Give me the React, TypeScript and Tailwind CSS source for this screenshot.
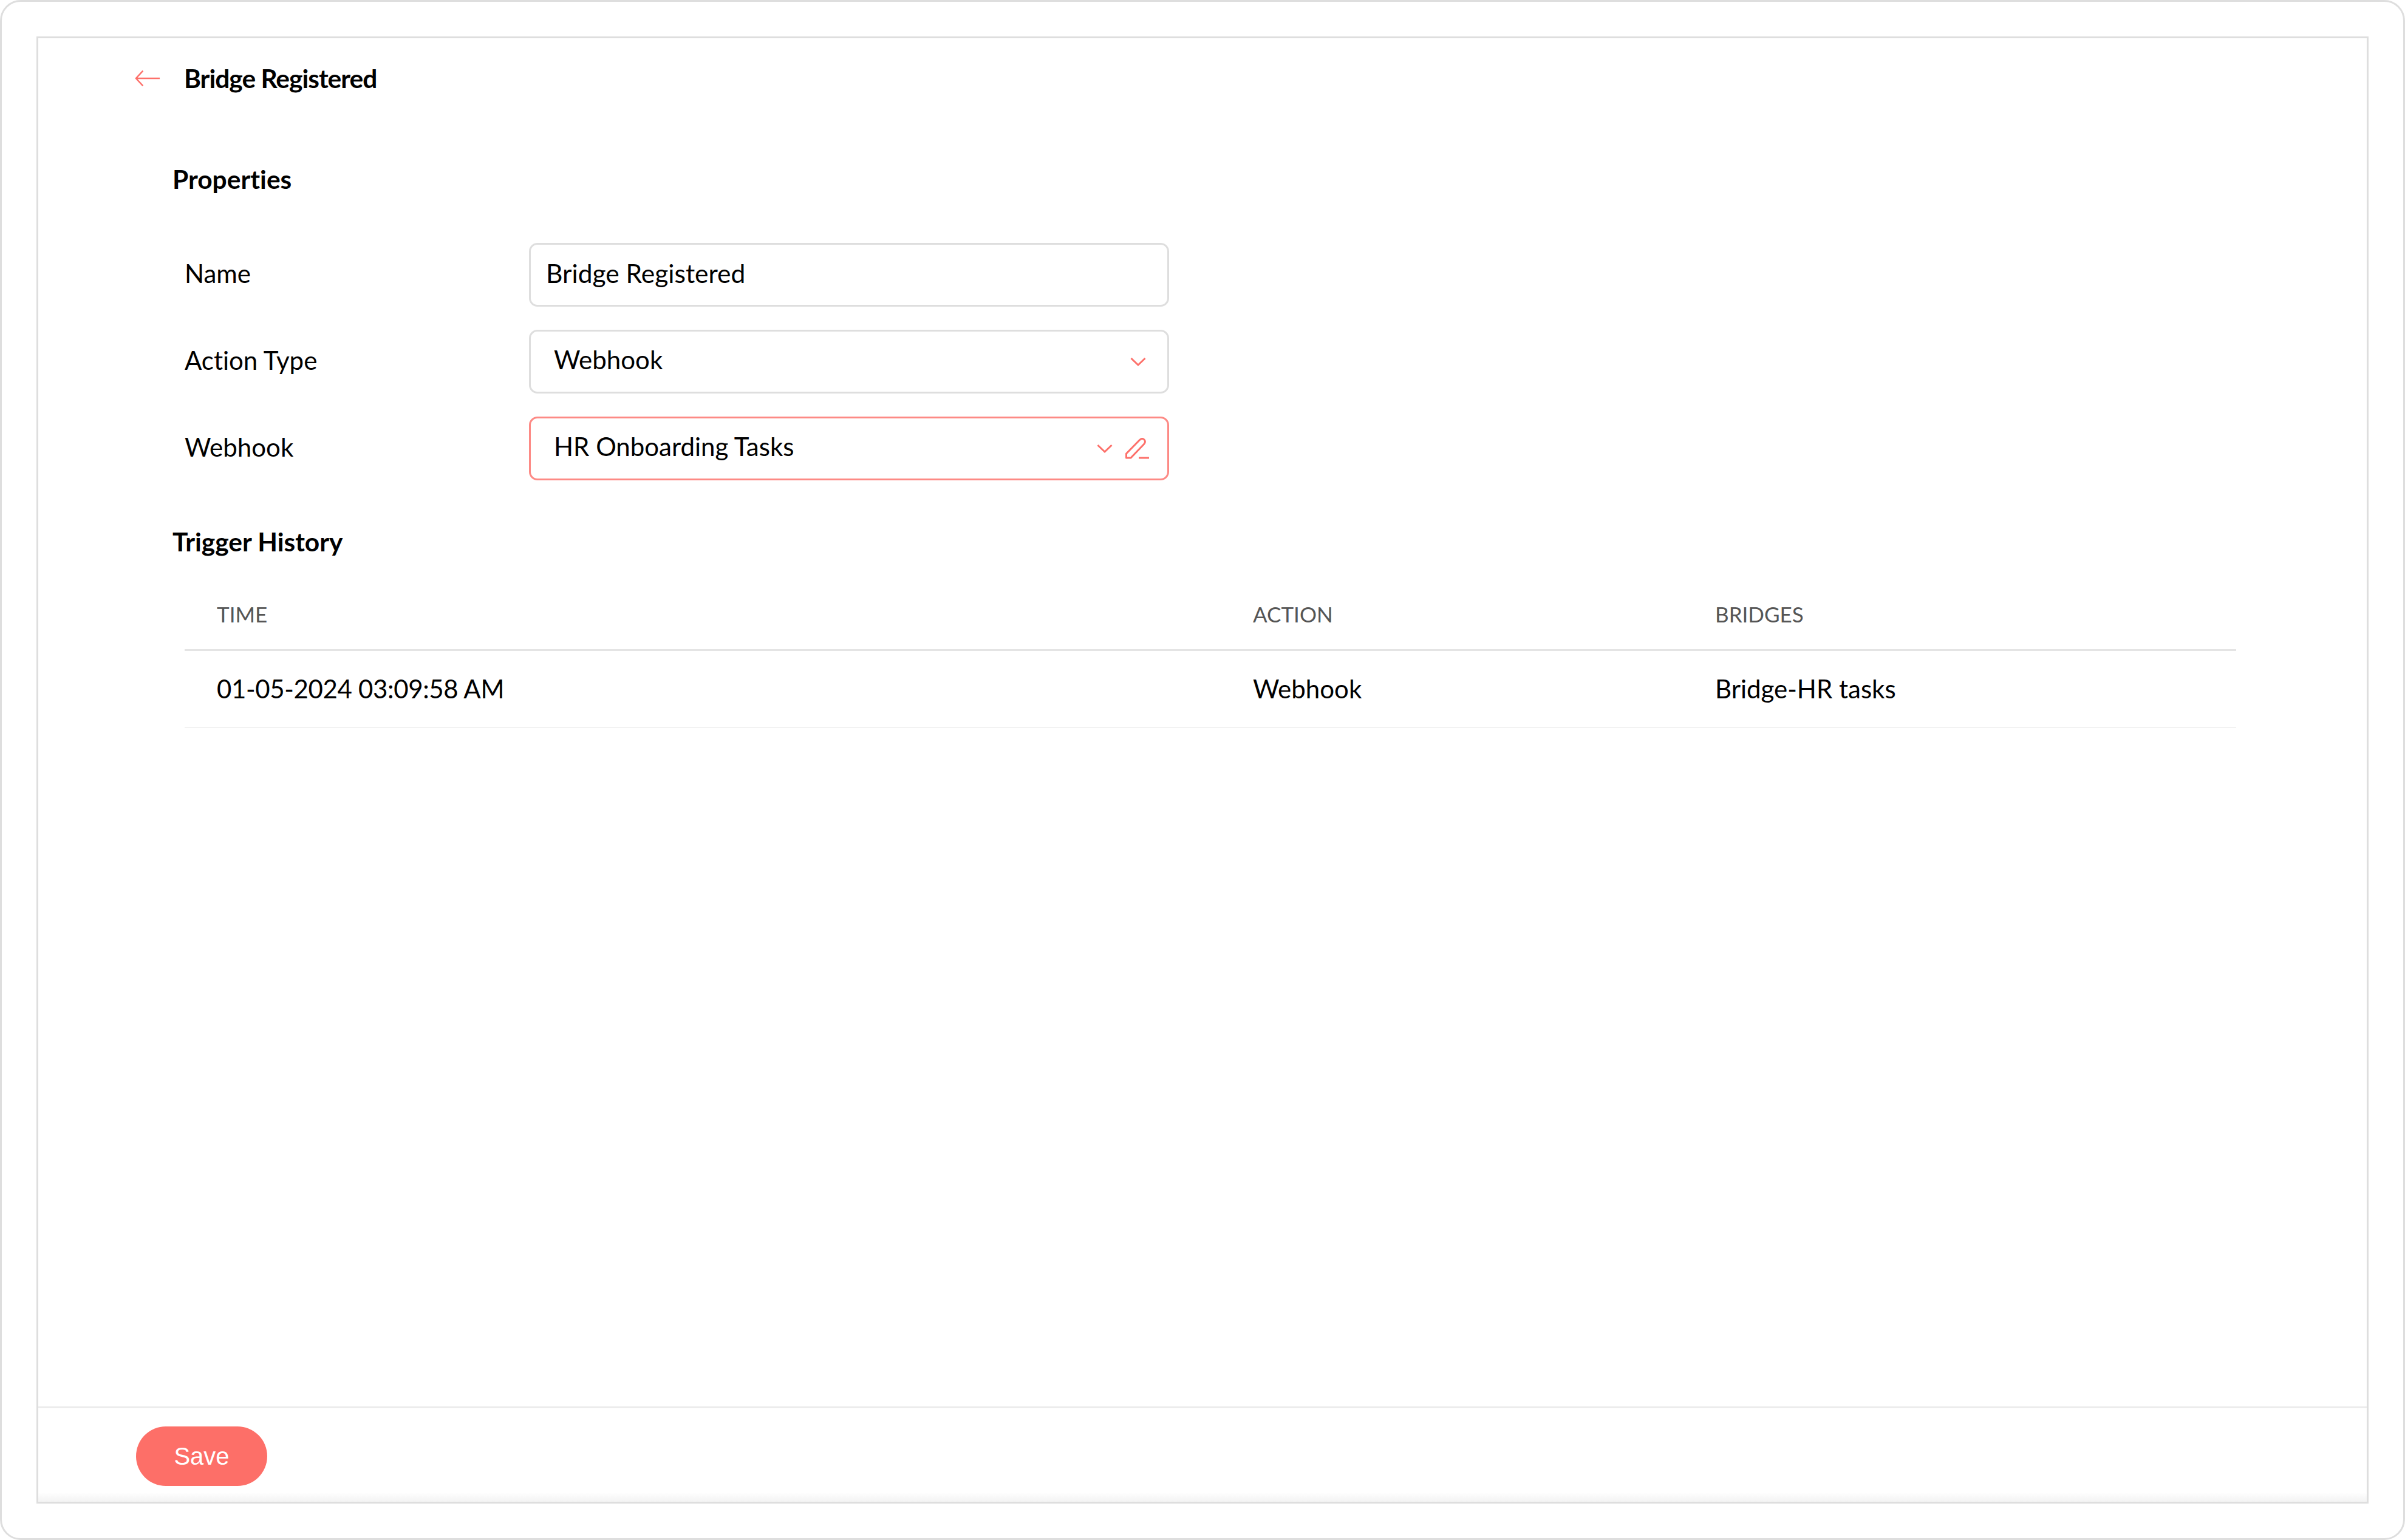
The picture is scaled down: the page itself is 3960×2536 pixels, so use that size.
import { useState } from "react";

const fieldClass = "flex h-[105px] w-[1054px] items-center rounded-[14px] border-[3px] bg-white";
const labelClass = "mb-[5px] w-[567px] text-[42px] leading-[48px]";

function Chevron() {
  return (
    <svg viewBox="0 0 26 16" className="h-[16px] w-[26px]" fill="none" stroke="#fd706a" strokeWidth="3">
      <path d="M1.5 2 L13 13 L24.5 2" />
    </svg>
  );
}

function Pencil() {
  return (
    <svg viewBox="0 0 40 36" className="h-[36px] w-[40px]" fill="none" stroke="#fd706a" strokeWidth="3" strokeLinejoin="round">
      <path d="M1.5 26 L23 4 C26 1 29 1 31 3 C33 5 33 8 30.5 10.5 L9 33 L1.5 33 Z" />
      <path d="M22 33 L39 33" />
    </svg>
  );
}

export default function App() {
  const [name, setName] = useState("Bridge Registered");

  return (
    <div className="h-[2536px] w-[3960px] rounded-[34px] border-[3px] border-[#dedede] bg-white p-[57px] font-['Lato',sans-serif] text-black [font-variant-ligatures:none]">
      <div className="flex h-full flex-col border-[3px] border-[#dedede]">
        <main className="flex-1">
          <div className="flex items-center pl-[159px] pt-[42px]">
            <svg viewBox="0 0 44 28" className="h-[28px] w-[42px]" fill="none" stroke="#fd706a" strokeWidth="2.5">
              <path d="M43 14 L2 14 M14 1 L2 14 L14 27" />
            </svg>
            <h1 className="ml-[39px] text-[42.5px] font-bold leading-[48px] tracking-[-1px]">Bridge Registered</h1>
          </div>

          <section className="pl-[221px] pr-[216px]">
            <h2 className="mt-[118px] text-[42.5px] font-bold leading-[48px]">Properties</h2>

            <div className="mt-[81px] flex flex-col gap-[38px] pl-[20px]">
              <div className="flex items-center">
                <label className={labelClass}>Name</label>
                <div className={`${fieldClass} border-[#dedede]`}>
                  <input
                    value={name}
                    onChange={(e) => setName(e.target.value)}
                    className="mb-[5px] w-full bg-transparent pl-[25px] text-[42.5px] leading-[48px] outline-none"
                  />
                </div>
              </div>
              <div className="flex items-center">
                <label className={labelClass}>Action Type</label>
                <div className={`${fieldClass} border-[#dedede] pl-[38px] pr-[35px]`}>
                  <span className="mb-[8px] flex-1 text-[42px] leading-[48px]">Webhook</span>
                  <Chevron />
                </div>
              </div>
              <div className="flex items-center">
                <label className={labelClass}>Webhook</label>
                <div className={`${fieldClass} border-[#fd8a85] pl-[38px] pr-[29px]`}>
                  <span className="mb-[8px] flex-1 text-[42px] leading-[48px]">HR Onboarding Tasks</span>
                  <Chevron />
                  <span className="ml-[21px]">
                    <Pencil />
                  </span>
                </div>
              </div>
            </div>

            <h2 className="mt-[77px] text-[42.5px] font-bold leading-[48px]">Trigger History</h2>

            <table className="ml-[20px] mt-[37px] w-[3378px] table-fixed border-collapse text-left">
              <thead>
                <tr className="h-[117px] border-b-[3px] border-[#e4e4e4] text-[35px] text-[#555555]">
                  <th className="w-[1759px] pl-[53px] font-normal">TIME</th>
                  <th className="w-[761px] font-normal">ACTION</th>
                  <th className="font-normal">BRIDGES</th>
                </tr>
              </thead>
              <tbody>
                <tr className="h-[128px] border-b-[2px] border-[#f2f2f2] text-[42px]">
                  <td className="pl-[53px] tracking-[-0.35px]">01-05-2024 03:09:58 AM</td>
                  <td>Webhook</td>
                  <td>Bridge-HR tasks</td>
                </tr>
              </tbody>
            </table>
          </section>
        </main>

        <footer className="flex h-[157px] items-center border-t-[3px] border-[#ececec] bg-gradient-to-b from-white from-90% to-[#f3f3f3] pl-[161px] pt-[4px]">
          <button className="h-[98px] w-[216px] rounded-full bg-[#fd6f68] font-['Liberation_Sans',sans-serif] text-[40px] text-white">
            Save
          </button>
        </footer>
      </div>
    </div>
  );
}
